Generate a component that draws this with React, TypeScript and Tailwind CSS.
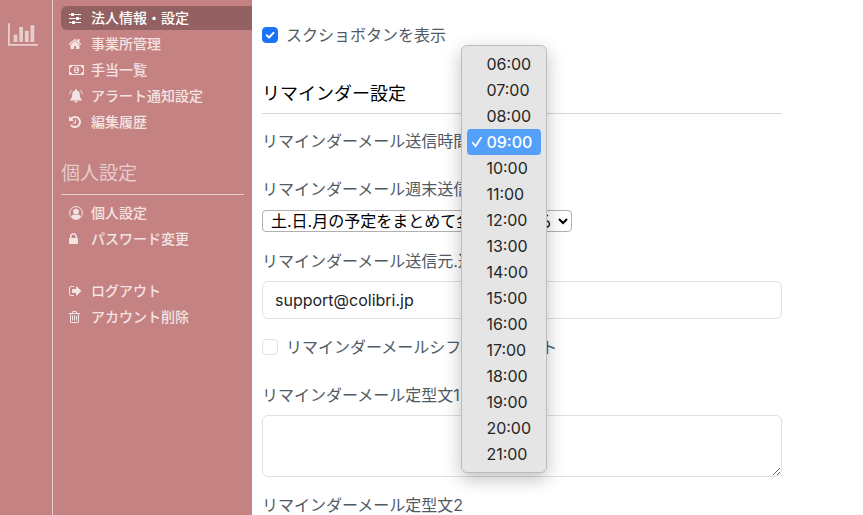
import { useState } from "react";
import type { ReactNode } from "react";
import clsx from "clsx";

const TIMES = [
  "06:00", "07:00", "08:00", "09:00", "10:00", "11:00", "12:00", "13:00",
  "14:00", "15:00", "16:00", "17:00", "18:00", "19:00", "20:00", "21:00",
];

function Icon({ box, className, children }: { box: string; className: string; children: ReactNode }) {
  return (
    <svg viewBox={box} className={className} fill="currentColor" aria-hidden="true">
      {children}
    </svg>
  );
}

const ICONS = {
  sliders: (
    <Icon box="128 0 1536 1792" className="h-[14px] w-3">
      <path d="M480 1408v128h-352v-128h352zm352-128q26 0 45 19t19 45v256q0 26-19 45t-45 19h-256q-26 0-45-19t-19-45v-256q0-26 19-45t45-19h256zm160-384v128h-864v-128h864zm-640-512v128h-224v-128h224zm1312 1024v128h-736v-128h736zm-960-1152q26 0 45 19t19 45v256q0 26-19 45t-45 19h-256q-26 0-45-19t-19-45v-256q0-26 19-45t45-19h256zm640 512q26 0 45 19t19 45v256q0 26-19 45t-45 19h-256q-26 0-45-19t-19-45v-256q0-26 19-45t45-19h256zm320 128v128h-224v-128h224zm0-512v128h-864v-128h864z" />
    </Icon>
  ),
  home: (
    <Icon box="64 0 1664 1792" className="h-[14px] w-[13px]">
      <path d="M1408 992v480q0 26-19 45t-45 19h-384v-384h-256v384h-384q-26 0-45-19t-19-45v-480q0-1 .5-3t.5-3l575-474 575 474q1 2 1 6zm223-69l-62 74q-8 9-21 11h-3q-13 0-21-7l-692-577-692 577q-12 8-24 7-13-2-21-11l-62-74q-8-10-7-23.5t11-21.5l719-599q32-26 76-26t76 26l244 204v-195q0-14 9-23t23-9h192q14 0 23 9t9 23v408l219 182q10 8 11 21.5t-7 23.5z" />
    </Icon>
  ),
  money: (
    <Icon box="0 0 1920 1792" className="h-[14px] w-[15px]">
      <path d="M768 1152h384v-96h-128v-448h-114l-148 137 77 80q42-37 55-57h2v288h-128v96zm512-256q0 70-21 142t-59.5 134-101.5 101-138 39-138-39-101.5-101-59.5-134-21-142 21-142 59.5-134 101.5-101 138-39 138 39 101.5 101 59.5 134 21 142zm512 256v-512q-106 0-181-75t-75-181h-1152q0 106-75 181t-181 75v512q106 0 181 75t75 181h1152q0-106 75-181t181-75zm128-832v1152q0 26-19 45t-45 19h-1792q-26 0-45-19t-19-45v-1152q0-26 19-45t45-19h1792q26 0 45 19t19 45z" />
    </Icon>
  ),
  bell: (
    <Icon box="0 0 14 14" className="size-[14px]">
      <path d="M7 .2c.6 0 1 .4 1 1v.4c1.700.4 2.800 1.800 2.800 3.600 0 2.800.6 4.300 2.200 5.500v.8H1v-.8c1.600-1.200 2.200-2.700 2.200-5.500 0-1.800 1.100-3.200 2.800-3.600v-.4c0-.6.4-1 1-1zM5.400 12h3.200a1.600 1.600 0 0 1-3.200 0z" />
      <path d="M2.600 1.200C1.500 2.200 1 3.500.8 5M11.400 1.200c1.100 1 1.600 2.300 1.800 3.800" fill="none" stroke="currentColor" strokeWidth="0.9" />
    </Icon>
  ),
  history: (
    <Icon box="128 0 1536 1792" className="h-[14px] w-3">
      <path d="M1664 896q0 156-61 298t-164 245-245 164-298 61q-172 0-327-72.5t-264-204.5q-7-10-6.5-22.5t8.5-20.5l137-138q10-9 25-9 16 2 23 12 73 95 179 147t225 52q104 0 198.5-40.5t163.5-109.5 109.5-163.5 40.5-198.5-40.5-198.5-109.5-163.5-163.5-109.5-198.5-40.5q-98 0-188 35.5t-160 101.5l137 138q31 30 14 69-17 40-59 40h-448q-26 0-45-19t-19-45v-448q0-42 40-59 39-17 69 14l130 129q107-101 244.5-156.5t284.5-55.5q156 0 298 61t245 164 164 245 61 298zm-640-288v448q0 14-9 23t-23 9h-320q-14 0-23-9t-9-23v-64q0-14 9-23t23-9h224v-352q0-14 9-23t23-9h64q14 0 23 9t9 23z" />
    </Icon>
  ),
  user: (
    <Icon box="0 0 14 14" className="size-[14px]">
      <circle cx="7" cy="7" r="6.4" fill="none" stroke="currentColor" />
      <circle cx="7" cy="5.600" r="2.900" />
      <path d="M2.300 11c.5-1.700 1.400-2.500 2.600-2.600 1.300.8 2.900.8 4.200 0 1.200.1 2.100.9 2.600 2.600A6.200 6.200 0 0 1 7 13.200 6.200 6.200 0 0 1 2.300 11z" />
    </Icon>
  ),
  lock: (
    <Icon box="320 0 1152 1792" className="h-[14px] w-[9px]">
      <path d="M640 768h512v-192q0-106-75-181t-181-75-181 75-75 181v192zm832 96v576q0 40-28 68t-68 28h-960q-40 0-68-28t-28-68v-576q0-40 28-68t68-28h32v-192q0-184 132-316t316-132 316 132 132 316v192h32q40 0 68 28t28 68z" />
    </Icon>
  ),
  signOut: (
    <Icon box="64 0 1664 1792" className="h-[14px] w-[13px]">
      <path d="M704 1440q0 4 1 20t.5 26.500-3 23.500-10 19.500-20.500 6.500h-320q-119 0-203.500-84.500t-84.500-203.500v-704q0-119 84.500-203.500t203.500-84.500h320q13 0 22.500 9.500t9.500 22.500q0 4 1 20t.5 26.500-3 23.500-10 19.500-20.500 6.500h-320q-66 0-113 47t-47 113v704q0 66 47 113t113 47h312l11.500 1 11.500 3 8 5.500 7 9 2 13.500zm928-544q0 26-19 45l-544 544q-19 19-45 19t-45-19-19-45v-288h-448q-26 0-45-19t-19-45v-384q0-26 19-45t45-19h448v-288q0-26 19-45t45-19 45 19l544 544q19 19 19 45z" />
    </Icon>
  ),
  trash: (
    <Icon box="192 0 1408 1792" className="h-[14px] w-[11px]">
      <path d="M704 736v576q0 14-9 23t-23 9h-64q-14 0-23-9t-9-23v-576q0-14 9-23t23-9h64q14 0 23 9t9 23zm256 0v576q0 14-9 23t-23 9h-64q-14 0-23-9t-9-23v-576q0-14 9-23t23-9h64q14 0 23 9t9 23zm256 0v576q0 14-9 23t-23 9h-64q-14 0-23-9t-9-23v-576q0-14 9-23t23-9h64q14 0 23 9t9 23zm128 724v-948h-896v948q0 22 7 40.500t14.500 27 10.500 8.500h832q3 0 10.500-8.500t14.500-27 7-40.500zm-672-1076h448l-48-117q-7-9-17-11h-317q-10 2-17 11zm928 32v64q0 14-9 23t-23 9h-96v948q0 83-47 143.500t-113 60.500h-832q-66 0-113-58.500t-47-141.500v-952h-96q-14 0-23-9t-9-23v-64q0-14 9-23t23-9h309l70-167q15-37 54-63t79-26h320q40 0 79 26t54 63l70 167h309q14 0 23 9t9 23z" />
    </Icon>
  ),
};

type Item = { label: string; icon: keyof typeof ICONS; active?: boolean };

const COMPANY: Item[] = [
  { label: "法人情報・設定", icon: "sliders", active: true },
  { label: "事業所管理", icon: "home" },
  { label: "手当一覧", icon: "money" },
  { label: "アラート通知設定", icon: "bell" },
  { label: "編集履歴", icon: "history" },
];

const PERSONAL: Item[] = [
  { label: "個人設定", icon: "user" },
  { label: "パスワード変更", icon: "lock" },
];

const ACCOUNT: Item[] = [
  { label: "ログアウト", icon: "signOut" },
  { label: "アカウント削除", icon: "trash" },
];

function NavList({ items, className }: { items: Item[]; className?: string }) {
  return (
    <ul className={clsx("flex flex-col gap-0.5", className)}>
      {items.map((item) => (
        <li key={item.label}>
          <a
            href="#"
            className={clsx(
              "flex h-6 items-center rounded-l-md pl-2 text-sm font-medium",
              item.active ? "bg-[#936161] text-white" : "text-[#f3e4e4]"
            )}
          >
            <span className="flex w-[22px] shrink-0">{ICONS[item.icon]}</span>
            {item.label}
          </a>
        </li>
      ))}
    </ul>
  );
}

function CheckRow({ id, label, defaultChecked, className }: {
  id: string;
  label: string;
  defaultChecked?: boolean;
  className?: string;
}) {
  return (
    <div className={clsx("flex items-center gap-2", className)}>
      <span className="relative flex size-4 shrink-0">
        <input
          id={id}
          type="checkbox"
          defaultChecked={defaultChecked}
          className="peer size-4 appearance-none rounded border border-[#dee2e6] bg-white checked:border-[#1a73f8] checked:bg-[#1a73f8]"
        />
        <svg
          viewBox="0 0 16 16"
          className="pointer-events-none absolute inset-0 hidden text-white peer-checked:block"
          fill="none"
          stroke="currentColor"
          strokeWidth="2"
          strokeLinecap="round"
          strokeLinejoin="round"
        >
          <path d="M4.700 8.300l2.300 2.200 4.500-4.600" />
        </svg>
      </span>
      <label htmlFor={id}>{label}</label>
    </div>
  );
}

function TimeMenu({ value, onSelect }: { value: string; onSelect: (t: string) => void }) {
  return (
    <ul
      role="listbox"
      aria-label="送信時間"
      className="absolute -top-[85px] -right-px z-10 w-[86px] rounded-md border border-[#bdbdbd] bg-[#e5e5e5] p-[5px] text-[#262626] shadow-[0_6px_18px_rgba(0,0,0,0.25)]"
    >
      {TIMES.map((t) => (
        <li
          key={t}
          role="option"
          aria-selected={t === value}
          onClick={() => onSelect(t)}
          className={clsx(
            "flex h-[26px] items-center rounded",
            t === value && "bg-[#539ffa] font-medium text-white"
          )}
        >
          <span className="flex w-[19px] shrink-0 justify-center">
            {t === value && (
              <svg viewBox="0 0 12 12" className="size-3" fill="none" stroke="currentColor" strokeWidth="1.8" strokeLinecap="round" strokeLinejoin="round">
                <path d="M1.800 6.800l2.700 3.400 5.500-8.400" />
              </svg>
            )}
          </span>
          {t}
        </li>
      ))}
    </ul>
  );
}

export default function App() {
  const [time, setTime] = useState("09:00");

  return (
    <div className="flex h-screen overflow-hidden bg-white font-[Inter,'Noto_Sans_CJK_JP',sans-serif] text-base" lang="ja">
      <aside className="flex w-[252px] shrink-0 bg-[#c58282]">
        <div className="w-[53px] shrink-0 border-r border-[#e6cccc] pt-[23px] pl-2">
          <a href="#" aria-label="集計" className="block text-[#e8cdcd]">
            <Icon box="0 0 2048 1536" className="h-[23px] w-[30px]">
              <path d="M640 768v512h-256v-512h256zM1024 256v1024h-256v-1024h256zM2048 1408v128h-2048v-1536h128v1408h1920zM1408 512v768h-256v-768h256zM1792 128v1152h-256v-1152h256z" />
            </Icon>
          </a>
        </div>
        <nav className="flex-1 pt-1.5 pl-2">
          <NavList items={COMPANY} />
          <h2 className="mt-[26px] mr-2 border-b border-[#e6cccc] pb-1.5 text-[19px] leading-7 text-[#e6cccc]">
            個人設定
          </h2>
          <NavList items={PERSONAL} className="mt-1.5" />
          <NavList items={ACCOUNT} className="mt-7" />
        </nav>
      </aside>

      <main className="min-w-0 flex-1 px-2.5 pt-[23px] text-[#4f5a66]">
        <form className="flex w-full max-w-[520px] flex-col">
          <CheckRow id="screenshot" label="スクショボタンを表示" defaultChecked />

          <h2 className="mt-[33px] border-b border-[#d5d5d5] pb-[5px] text-lg text-black">リマインダー設定</h2>

          <div className="mt-[15px] flex items-center">
            <label htmlFor="send-time" className="whitespace-nowrap">リマインダーメール送信時間</label>
            <div className="relative flex">
              <select
                id="send-time"
                value={time}
                onChange={(e) => setTime(e.target.value)}
                className="h-[22px] w-[77px] appearance-none rounded border border-[#8e8e8e] pl-2 text-black"
              >
                {TIMES.map((t) => (
                  <option key={t}>{t}</option>
                ))}
              </select>
              <TimeMenu value={time} onSelect={setTime} />
            </div>
          </div>

          <label htmlFor="weekend" className="mt-6">リマインダーメール週末送信</label>
          <div className="relative mt-[9px] flex w-[310px]">
            <select id="weekend" className="h-[22px] w-full appearance-none rounded border border-[#b0b0b0] pl-2 leading-5 text-black">
              <option>土.日.月の予定をまとめて金に送信する</option>
            </select>
            <svg
              viewBox="0 0 10 10"
              className="pointer-events-none absolute top-1.5 right-1 size-2.5 text-black"
              fill="none"
              stroke="currentColor"
              strokeWidth="2"
            >
              <path d="M1 3l4 4 4-4" />
            </svg>
          </div>

          <label htmlFor="sender" className="mt-[17px]">リマインダーメール送信元.返信先</label>
          <input
            id="sender"
            type="email"
            defaultValue="support@colibri.jp"
            className="mt-2 h-[38px] rounded-md border border-[#dee0e5] px-3 text-[#212529]"
          />

          <CheckRow id="shift-list" label="リマインダーメールシフト送信リスト" className="mt-4" />

          <label htmlFor="template1" className="mt-6">リマインダーメール定型文1</label>
          <textarea id="template1" className="mt-2 h-[62px] resize-y rounded-md border border-[#dee0e5] px-3 py-1.5" />

          <label htmlFor="template2" className="mt-4">リマインダーメール定型文2</label>
          <textarea id="template2" className="mt-2 h-[62px] resize-y rounded-md border border-[#dee0e5] px-3 py-1.5" />
        </form>
      </main>
    </div>
  );
}
